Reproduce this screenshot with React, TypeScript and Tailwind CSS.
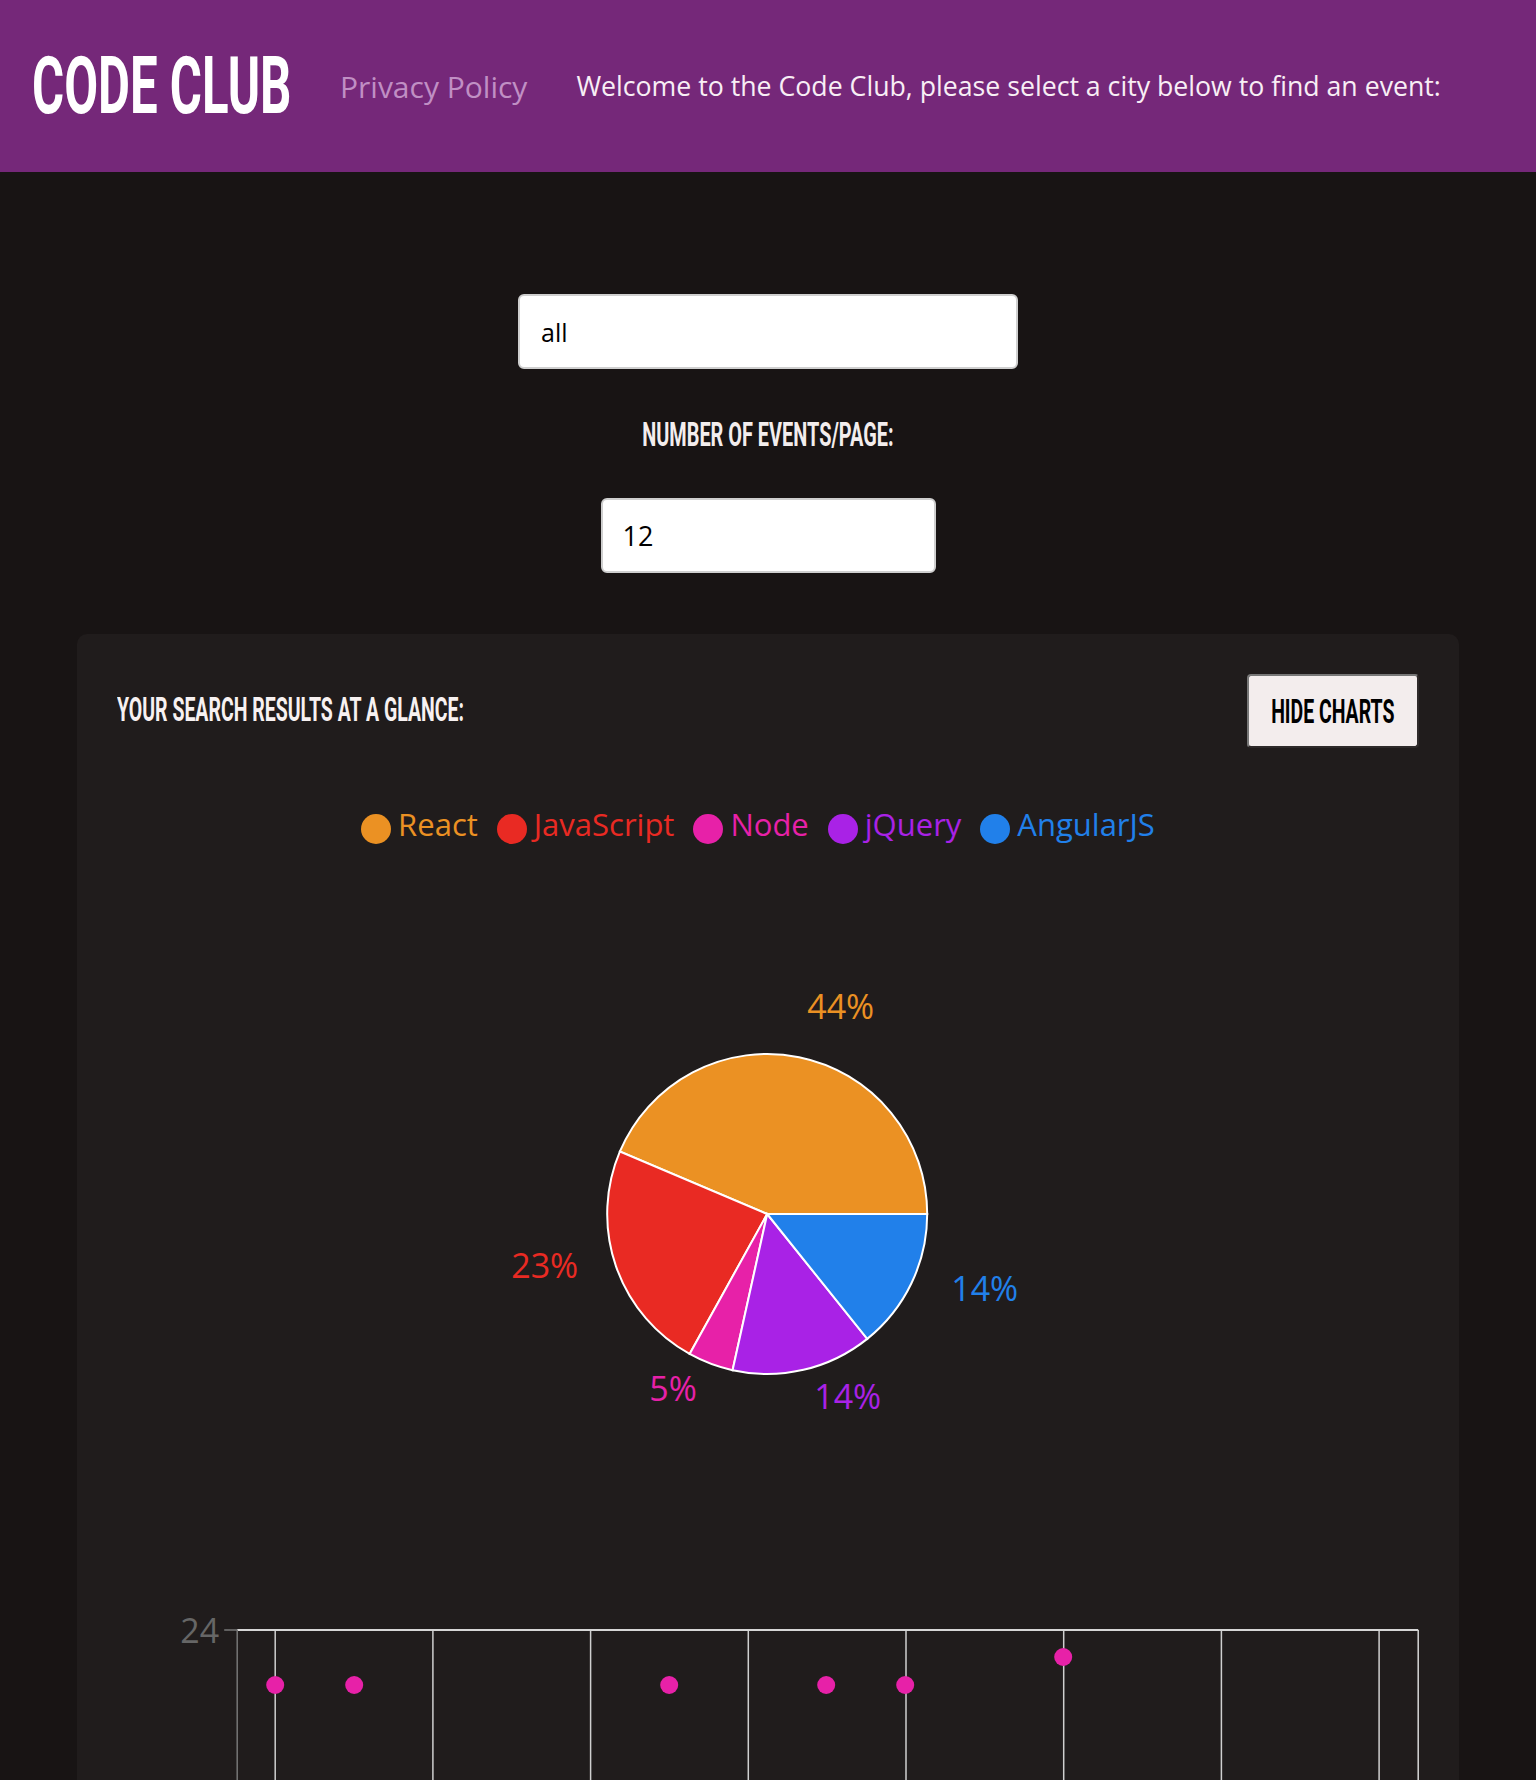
const bebas = "font-['Roboto','Liberation_Sans',sans-serif] font-bold uppercase leading-none"

const slices = [
  { name: 'React', color: '#eb9123', from: 0, to: 157 },
  { name: 'JavaScript', color: '#e92a23', from: 157, to: 241 },
  { name: 'Node', color: '#e721a8', from: 241, to: 257.5 },
  { name: 'jQuery', color: '#a922e6', from: 257.5, to: 308.7 },
  { name: 'AngularJS', color: '#2180ea', from: 308.7, to: 360 },
]

// label anchors, measured in page coords (x start, baseline)
const pieLabels = [
  { text: '44%', color: '#eb9123', x: 807, y: 1019 },
  { text: '23%', color: '#e92a23', x: 511, y: 1278 },
  { text: '14%', color: '#2180ea', x: 951, y: 1301 },
  { text: '5%', color: '#e721a8', x: 649, y: 1401 },
  { text: '14%', color: '#a922e6', x: 814, y: 1409 },
]

const LEFT = 116.8
const PIE_TOP = 849
const SCATTER_TOP = 1549

function point(cx: number, cy: number, r: number, deg: number) {
  const a = (deg * Math.PI) / 180
  return [cx + r * Math.cos(a), cy - r * Math.sin(a)]
}

function sector(cx: number, cy: number, r: number, from: number, to: number) {
  const [x0, y0] = point(cx, cy, r, from)
  const [x1, y1] = point(cx, cy, r, to)
  const large = to - from > 180 ? 1 : 0
  return `M${cx},${cy} L${x0},${y0} A${r},${r} 0 ${large} 0 ${x1},${y1} Z`
}

function PieChart() {
  const cx = 767 - LEFT
  const cy = 1214 - PIE_TOP
  return (
    <svg width={1303} height={700} viewBox="0 0 1303 700" className="block">
      {slices.map((s) => (
        <path key={s.name} d={sector(cx, cy, 160, s.from, s.to)} fill={s.color} stroke="#fff" strokeWidth={2} />
      ))}
      {pieLabels.map((l, i) => (
        <text
          key={i}
          x={l.x - LEFT}
          y={l.y - PIE_TOP}
          fill={l.color}
          fontSize={34}
          fontFamily="'Open Sans', sans-serif"
        >
          {l.text}
        </text>
      ))}
    </svg>
  )
}

function ScatterChart() {
  const top = 1630 - SCATTER_TOP
  const left = 237 - LEFT
  const right = 1418 - LEFT
  const grid = [0, 1, 2, 3, 4, 5, 6, 7].map((i) => 275 - LEFT + i * 157.7)
  const dots = [
    { x: 275, y: 1685 },
    { x: 354, y: 1685 },
    { x: 669, y: 1685 },
    { x: 826, y: 1685 },
    { x: 905, y: 1685 },
    { x: 1063, y: 1657 },
  ]
  return (
    <svg width={1303} height={420} viewBox="0 0 1303 420" className="block">
      {grid.map((x) => (
        <line key={x} x1={x} y1={top} x2={x} y2={420} stroke="#cfcfcf" strokeWidth={1.5} />
      ))}
      <line x1={left} y1={top} x2={right} y2={top} stroke="#d6d6d6" strokeWidth={2} />
      <line x1={right} y1={top} x2={right} y2={420} stroke="#d6d6d6" strokeWidth={1.5} />
      <line x1={left} y1={top} x2={left} y2={420} stroke="#777" strokeWidth={1.5} />
      <line x1={left - 13} y1={top} x2={left} y2={top} stroke="#777" strokeWidth={1.5} />
      <text x={left - 18} y={top + 13} textAnchor="end" fill="#666" fontSize={34} fontFamily="'Open Sans', sans-serif">
        24
      </text>
      {dots.map((d, i) => (
        <circle key={i} cx={d.x - LEFT} cy={d.y - SCATTER_TOP} r={9} fill="#e721a8" />
      ))}
    </svg>
  )
}

export default function App() {
  return (
    <div className="min-h-[1780px] bg-[#181414] font-['Open_Sans',sans-serif]">
      {/* Header */}
      <header className="flex h-[172px] items-center bg-[#752879] pl-8">
        <h1 className={`${bebas} w-[259px] text-[80px] text-white`}>
          <span className="inline-block origin-left scale-x-[0.614] whitespace-nowrap">Code Club</span>
        </h1>
        <a href="#" className="ml-[49px] text-[30px] text-[#c08fc4]">
          Privacy Policy
        </a>
        <p className="ml-[49px] text-[26.7px] text-[#f8eef5]">
          Welcome to the Code Club, please select a city below to find an event:
        </p>
      </header>

      <main className="flex flex-col items-center pt-[122px] pb-10">
        <input
          readOnly
          value="all"
          className="h-[75px] w-[500px] rounded-md border-2 border-[#cfcfcf] bg-white px-[21px] text-[25px] text-black outline-none"
        />
        <label className={`${bebas} mt-[48px] text-[34px] text-[#f3eded]`}>
          <span className="inline-block scale-x-[0.585] whitespace-nowrap">Number of events/page:</span>
        </label>
        <input
          readOnly
          value="12"
          className="mt-[47px] h-[75px] w-[335px] rounded-md border-2 border-[#cfcfcf] bg-white px-[20px] text-[27px] text-black outline-none"
        />

        {/* Charts card */}
        <section className="mt-[61px] w-[90%] rounded-[10px] bg-[#201c1c] px-10 pt-10 pb-10">
          <div className="flex h-[74px] items-center justify-between">
            <h2 className={`${bebas} mb-[4px] text-[34px] text-[#f7f1f1]`}>
              <span className="inline-block origin-left scale-x-[0.573] whitespace-nowrap">
                Your search results at a glance:
              </span>
            </h2>
            <button
              className={`${bebas} flex h-[74px] w-[172px] items-center justify-center rounded-[4px] border-2 border-t-[#777] border-l-[#777] border-r-[#2e2a2a] border-b-[#2e2a2a] bg-[#f3eded] text-[34px] text-black`}
            >
              <span className="inline-block shrink-0 scale-x-[0.572] whitespace-nowrap">Hide charts</span>
            </button>
          </div>

          <div className="mt-[56px] flex h-[40px] items-center justify-center gap-[19px] pr-[20px]">
            {slices.map((s) => (
              <div key={s.name} className="flex items-center gap-[7px]">
                <span className="mt-[9px] h-[30px] w-[30px] rounded-full" style={{ backgroundColor: s.color }} />
                <span className="text-[31px]" style={{ color: s.color }}>
                  {s.name}
                </span>
              </div>
            ))}
          </div>

          <div className="h-[5px]" />
          <PieChart />
          <ScatterChart />
        </section>
      </main>
    </div>
  )
}
